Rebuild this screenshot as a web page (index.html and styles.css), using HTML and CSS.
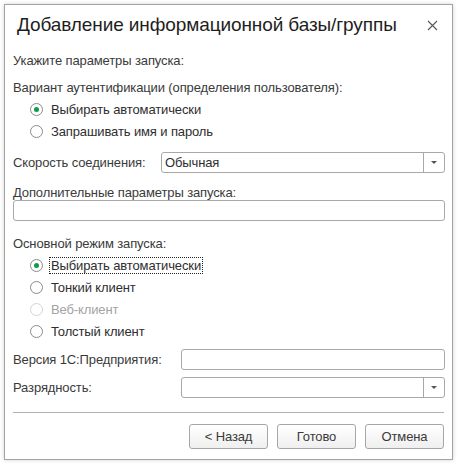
FILE: index.html
```html
<!DOCTYPE html>
<html lang="ru">
<head>
    <meta charset="UTF-8">
    <title>Добавление информационной базы/группы</title>
    <link rel="stylesheet" href="styles.css">
</head>
<body>
    <div class="window">
        <div class="title-bar">
            <h1>Добавление информационной базы/группы</h1>
            <span class="close">
                <svg width="11" height="11" viewBox="0 0 11 11"><path d="M1 1L10 10M10 1L1 10" stroke="#5a5a5a" stroke-width="1.2"/></svg>
            </span>
        </div>

        <div class="content">
            <div class="row first">Укажите параметры запуска:</div>
            <div class="row gap">Вариант аутентификации (определения пользователя):</div>
            <div class="radio checked"><span class="dot"></span><span class="caption">Выбирать автоматически</span></div>
            <div class="radio"><span class="dot"></span><span class="caption">Запрашивать имя и пароль</span></div>

            <div class="row field speed">
                <span class="label speed-label">Скорость соединения:</span>
                <div class="combo"><span class="value">Обычная</span><span class="drop"></span></div>
            </div>

            <div class="row small">Дополнительные параметры запуска:</div>
            <div class="input wide"></div>

            <div class="row mode">Основной режим запуска:</div>
            <div class="radio checked"><span class="dot"></span><span class="caption focused">Выбирать автоматически</span></div>
            <div class="radio"><span class="dot"></span><span class="caption">Тонкий клиент</span></div>
            <div class="radio disabled"><span class="dot"></span><span class="caption">Веб-клиент</span></div>
            <div class="radio"><span class="dot"></span><span class="caption">Толстый клиент</span></div>

            <div class="row field version">
                <span class="label long-label">Версия 1С:Предприятия:</span>
                <div class="input"></div>
            </div>
            <div class="row field bits">
                <span class="label long-label">Разрядность:</span>
                <div class="combo"><span class="value"></span><span class="drop"></span></div>
            </div>

            <div class="separator"></div>

            <div class="buttons">
                <button>&lt; Назад</button>
                <button>Готово</button>
                <button>Отмена</button>
            </div>
        </div>
    </div>
</body>
</html>
```

FILE: styles.css
```css
body {
    margin: 0;
    background: #ffffff;
    font-family: 'Liberation Sans', Arial, sans-serif;
    font-size: 13px;
    letter-spacing: -0.12px;
    color: #3a3a3a;
}

.window {
    margin: 4px;
    width: 447px;
    height: 454px;
    border: 1px solid #a3a3a3;
    background: #fff;
    box-shadow: 0 0 4px rgba(0,0,0,0.18);
}

.title-bar {
    height: 40px;
    display: flex;
    align-items: center;
    justify-content: space-between;
    padding: 0 14px 0 12px;
}

.title-bar h1 {
    margin: 0;
    font-weight: normal;
    font-size: 19px;
    color: #1e1e1e;
    letter-spacing: -0.1px;
}

.close {
    display: flex;
    width: 11px;
    height: 11px;
}

.content {
    padding: 0 7px 0 8px;
}

.row {
    height: 22px;
    display: flex;
    align-items: center;
}

.row.first { margin-top: 4px; }
.row.gap { margin-top: 5px; }
.row.small { height: 16px; margin-top: 11px; }
.row.mode { margin-top: 11px; }
.field.speed { margin-top: 9px; }
.field.version { margin-top: 6px; }
.field.bits { margin-top: 6px; }

.label {
    flex-shrink: 0;
}

.speed-label { width: 148px; }
.long-label { width: 168px; }

.radio {
    height: 22px;
    display: flex;
    align-items: center;
    padding-left: 17px;
    color: #2e2e2e;
}

.radio .dot {
    width: 13px;
    height: 13px;
    box-sizing: border-box;
    border: 1px solid #8a8a8a;
    border-radius: 50%;
    margin-right: 8px;
    display: flex;
    align-items: center;
    justify-content: center;
}

.radio.checked .dot::after {
    content: '';
    width: 5px;
    height: 5px;
    border-radius: 50%;
    background: #0f9b48;
}

.radio.disabled { color: #a3a3a3; }
.radio.disabled .dot { border-color: #d4d4d4; }

.caption {
    padding: 0 1px;
    margin-left: -1px;
    line-height: 15px;
}

.caption.focused {
    outline: 1px dotted #222;
    outline-offset: 0;
}

.combo, .input {
    flex: 1;
    height: 21px;
    box-sizing: border-box;
    border: 1px solid #a8a8a8;
    border-radius: 3px;
    background: #fff;
    display: flex;
    align-items: center;
    color: #2e2e2e;
}

.input.wide {
    width: 100%;
    flex: none;
}

.combo .value {
    flex: 1;
    padding-left: 3px;
}

.combo .drop {
    width: 20px;
    height: 100%;
    border-left: 1px solid #a8a8a8;
    display: flex;
    align-items: center;
    justify-content: center;
}

.combo .drop::after {
    content: '';
    border-left: 3px solid transparent;
    border-right: 3px solid transparent;
    border-top: 3px solid #555;
}

.separator {
    margin-top: 14px;
    height: 1px;
    background: #b0b0b0;
    margin-right: 1px;
}

.buttons {
    display: flex;
    justify-content: flex-end;
    gap: 9px;
    margin-top: 11px;
    margin-right: 1px;
}

.buttons button {
    width: 79px;
    height: 25px;
    border: 1px solid #a6a6a6;
    border-radius: 3px;
    background: linear-gradient(#ffffff, #efefef);
    font-family: 'Liberation Sans', Arial, sans-serif;
    font-size: 13px;
    letter-spacing: -0.12px;
    color: #3a3a3a;
    padding: 0;
}
```
